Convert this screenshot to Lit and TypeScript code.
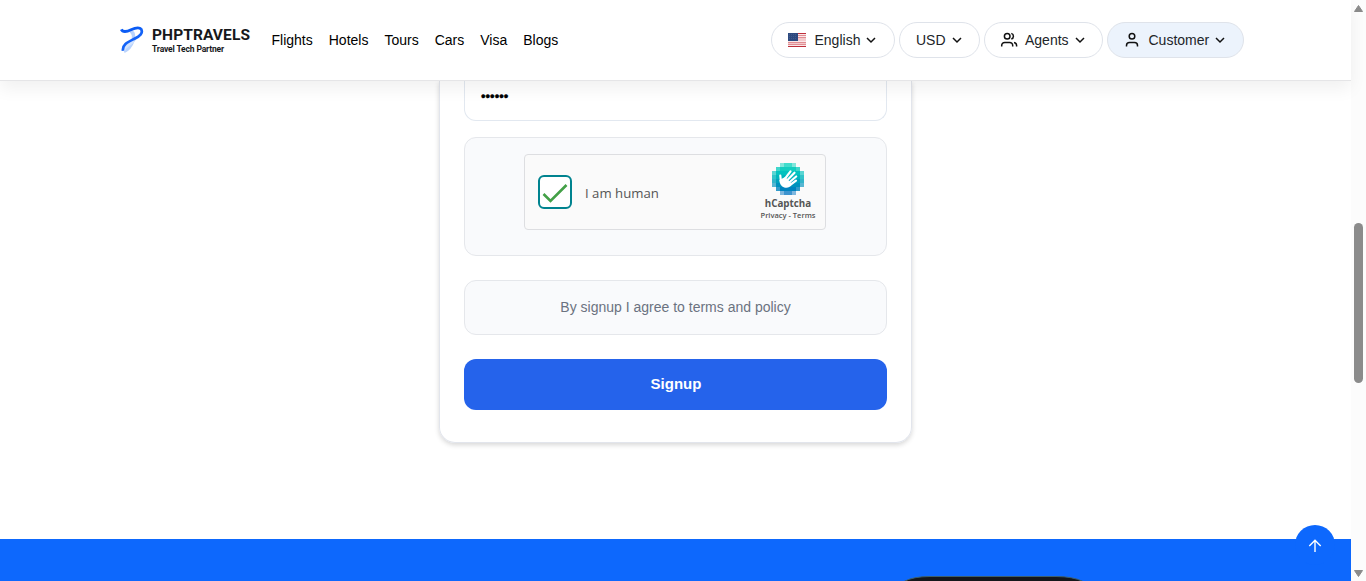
import { LitElement, html, svg, css } from "lit";
import { customElement } from "lit/decorators.js";

const chevron = html`<svg class="chev" width="12" height="12" viewBox="0 0 12 12" fill="none" stroke="#111" stroke-width="1.500"><path d="M2 4l4 4 4-4" /></svg>`;

const person = html`<svg class="person" width="18" height="18" viewBox="0 0 18 18" fill="none" stroke="#111" stroke-width="1.500"><circle cx="9" cy="5.200" r="2.800" /><path d="M3.500 15.600v-1.200a3 3 0 0 1 3-3h5a3 3 0 0 1 3 3v1.200" /></svg>`;

const people = html`<svg class="people" width="18" height="18" viewBox="0 0 18 18" fill="none" stroke="#111" stroke-width="1.500"><circle cx="7.200" cy="5.200" r="2.800" /><path d="M1.700 15.600v-1.200a3 3 0 0 1 3-3h5a3 3 0 0 1 3 3v1.200M11.300 2.400a2.900 2.900 0 0 1 0 5.600M14 11.600c1.800.4 2.600 1.500 2.600 2.800v1.200" /></svg>`;

const logoMark = html`<svg width="26" height="30" viewBox="0 0 26 30" fill="none">
  <path d="M12.500 6c3.500 2 3.600 6 2.300 10-1.300 3.800-3.600 8.200-8.800 10.300" stroke="#b9d3fc" stroke-width="3.400" />
  <path d="M17 13.500c-2 3.500-5 5.500-8 7.500-2 1.400-3 3-3.500 5" stroke="#d3e3fd" stroke-width="3" />
  <path d="M3.300 4.400C4.600 7.300 8.500 7 13 4.800c4.500-2.200 8.500-2.600 10.300-.6" stroke="#0b5cf5" stroke-width="2.800" />
  <path d="M22.900 3.800c2.800 4.200-1 7.200-6.400 9.900C10 17 4 19.500 5 25.800" stroke="#1463f7" stroke-width="2.700" />
</svg>`;

const flag = html`<svg width="18" height="14" viewBox="0 0 18 14" shape-rendering="crispEdges">
  <rect width="18" height="14" fill="#f3c9cb" />
  ${[0, 13].map((y) => svg`<rect y=${y} width="18" height="1" fill="#bf2f3b" />`)}
  ${[2, 4, 9, 11].map((y) => svg`<rect y=${y} width="18" height="1" fill="#e08d92" />`)}
  ${[1, 3, 8, 12].map((y) => svg`<rect y=${y} width="18" height="1" fill="#f9e7e8" />`)}
  <rect width="10" height="8" fill="#2d4a80" />
  ${[1, 3, 5].map((y) => [1, 3, 5, 7].map((x) => svg`<rect x=${x} y=${y} width="1" height="1" fill="#43598a" />`))}
</svg>`;

// Start and end column of every row in the pixelated badge.
const spans = [[2, 6], [1, 7], [0, 8], [0, 8], [0, 8], [0, 8], [1, 7], [2, 6]];
const rowColors = ["#3fdccb", "#12cdbf", "#04c2bf", "#00b6bd", "#00a2bd", "#0092bd", "#0083be", "#3d94cf"];
const captchaMark = html`<svg width="32" height="32" viewBox="0 0 32 32" shape-rendering="crispEdges">
  ${spans.map(([a, b], y) =>
    Array.from({ length: b - a }, (_, i) => {
      const x = a + i;
      const edge = i === 0 || x === b - 1;
      const opacity = edge ? (y === 2 || y === 5 || y === 0 || y === 7 ? 0.65 : 0.8) : 1;
      return svg`<rect x=${x * 4} y=${y * 4} width="4" height="4" fill=${rowColors[y]} opacity=${opacity} />`;
    })
  )}
  <g shape-rendering="geometricPrecision" stroke="#fff" stroke-linecap="round" stroke-width="2.200" fill="#fff">
    <path d="M12 17L18.500 8.300M14.500 18L22.500 9.700M16.500 20L24.200 13.500M18 22L24 17.600M9 19L8.300 12.500" />
    <path d="M8.300 17.500L13 15l6 6c-1.600 2.400-3.800 3.400-6.500 2.600-2.400-.7-3.900-2.600-4.200-6.100z" stroke-width="1.800" />
  </g>
</svg>`;

@customElement("app-root")
export class AppRoot extends LitElement {
  static styles = css`
    :host { display: flex; width: 1366px; height: 581px; overflow: hidden; background: #fff; font: 14px/20px "Liberation Sans", Arial, sans-serif; color: #111; }
    * { box-sizing: border-box; }
    svg { display: block; flex: none; }
    .page { width: 1351px; height: 581px; display: flex; flex-direction: column; position: relative; }
    header { height: 81px; flex: none; border-bottom: 1px solid #e5e5e7; background: #fff; position: relative; z-index: 1; box-shadow: 0 8px 16px rgba(0, 0, 0, .06); display: flex; align-items: center; padding: 0 107px 1px 118px; }
    .brand { display: flex; align-items: center; width: 153.500px; gap: 8px; }
    .brand-name { font: 700 15.500px/18px Roboto, sans-serif; letter-spacing: .1px; color: #17181b; }
    .brand-sub { font: 700 8.500px/10px Roboto, sans-serif; letter-spacing: -.15px; color: #17181b; }
    nav { display: flex; gap: 16px; color: #000; }
    .actions { margin-left: auto; display: flex; gap: 4px; }
    .pill { height: 36px; border: 1px solid #dfe3ea; border-radius: 18px; display: flex; align-items: center; color: #212529; padding-left: 16px; }
    .pill .chev { margin-left: 5px; }
    .lang { width: 124px; } .lang span { margin-left: 8.500px; }
    .cur { width: 81px; }
    .agents { width: 119px; padding-left: 15px; } .agents span { margin-left: 7px; }
    .customer { width: 137px; padding-left: 15px; background: #ecf3fc; } .customer span { margin-left: 7.500px; }
    main { height: 458px; flex: none; display: flex; justify-content: center; align-items: flex-start; }
    .card { width: 473px; height: 362px; border: 1px solid #e2e5ec; border-top: 0; border-radius: 0 0 16px 16px; padding: 0 24px 32px; box-shadow: 0 2px 5px rgba(0, 0, 0, .16); display: flex; flex-direction: column; }
    .field { height: 40px; flex: none; border: 1px solid #e2e8f0; border-top: 0; border-radius: 0 0 12px 12px; padding: 6px 16px; font-size: 13px; color: #000; -webkit-text-stroke: .4px #000; }
    .soft { border: 1px solid #e5e7eb; border-radius: 12px; background: #f9fafc; }
    .captcha-box { margin-top: 16px; height: 119px; flex: none; padding: 16px 59px; display: flex; align-items: flex-start; }
    .captcha { width: 302px; height: 76px; border: 1px solid #dddee1; border-radius: 4px; background: #fafafa; display: flex; align-items: center; padding: 0 9px 0 13px; font-family: "Open Sans", sans-serif; color: #555; }
    .check { width: 34px; height: 34px; border: 2px solid #00838f; border-radius: 6px; background: #fff; }
    .human { margin-left: 13px; padding-top: 2px; font-size: 13.200px; }
    .mark { margin-left: auto; width: 56px; display: flex; flex-direction: column; align-items: center; padding-bottom: 2px; }
    .mark b { font-size: 9.800px; line-height: 13px; margin-top: 2px; padding-top: .5px; margin-bottom: -.5px; }
    .mark small { font-size: 7.500px; line-height: 10px; white-space: nowrap; font-weight: 600; }
    .terms { margin-top: 24px; height: 55px; flex: none; display: grid; place-items: center; color: #6b7280; padding-bottom: 2px; }
    .signup { margin-top: 24px; height: 51px; flex: none; border: 0; border-radius: 12px; background: #2563eb; color: #fff; font: 700 15px/20px "Liberation Sans", sans-serif; padding: 0 0 2px 1px; }
    footer { height: 42px; flex: none; background: #0d68fd; overflow: hidden; display: flex; align-items: flex-end; padding-left: 899px; }
    .top { position: absolute; left: 1295px; top: 525px; width: 40px; height: 40px; border-radius: 50%; background: #0d68fd; display: grid; place-items: center; z-index: 2; }
    .scroll { width: 15px; height: 581px; background: #fcfcfc; display: flex; flex-direction: column; align-items: center; padding: 5px 0 4px; }
    .thumb { width: 9px; height: 160px; border-radius: 5px; background: #8b8b8b; margin: 211px 0 auto; }
  `;

  render() {
    return html`
      <div class="page">
        <header>
          <div class="brand">
            ${logoMark}
            <div class="brand-text"><div class="brand-name">PHPTRAVELS</div><div class="brand-sub">Travel Tech Partner</div></div>
          </div>
          <nav>${["Flights", "Hotels", "Tours", "Cars", "Visa", "Blogs"].map((t) => html`<span>${t}</span>`)}</nav>
          <div class="actions">
            <div class="pill lang">${flag}<span>English</span>${chevron}</div>
            <div class="pill cur"><span>USD</span>${chevron}</div>
            <div class="pill agents">${people}<span>Agents</span>${chevron}</div>
            <div class="pill customer">${person}<span>Customer</span>${chevron}</div>
          </div>
        </header>
        <main>
          <div class="card">
            <div class="field">••••••</div>
            <div class="captcha-box soft">
              <div class="captcha">
                <div class="check"><svg width="30" height="30" viewBox="0 0 30 30" fill="none" stroke="#43a047" stroke-width="2.600"><path d="M3.500 17l7 7L26.500 8" /></svg></div>
                <span class="human">I am human</span>
                <div class="mark">${captchaMark}<b>hCaptcha</b><small>Privacy - Terms</small></div>
              </div>
            </div>
            <div class="terms soft">By signup I agree to terms and policy</div>
            <button class="signup">Signup</button>
          </div>
        </main>
        <footer>
          <svg width="190" height="6" viewBox="0 0 190 6"><path d="M5 6.500Q14 1.500 31 1.500H157Q174 1.500 184 6.500" fill="#14171b" stroke="#3d5f6b" /></svg>
        </footer>
        <div class="top"><svg width="16" height="16" viewBox="0 0 16 16" fill="none" stroke="#fff" stroke-width="1.400"><path d="M8 15V3.500M2.300 9L8 3.300 13.700 9" /></svg></div>
      </div>
      <div class="scroll">
        <svg width="9" height="7" viewBox="0 0 9 7"><path d="M4.500 .5L8.500 6.500H.5z" fill="#8b8b8b" stroke="#8b8b8b" stroke-linejoin="round" /></svg>
        <div class="thumb"></div>
        <svg width="9" height="7" viewBox="0 0 9 7"><path d="M4.500 6.500L8.500 .5H.5z" fill="#8b8b8b" stroke="#8b8b8b" stroke-linejoin="round" /></svg>
      </div>
    `;
  }
}
